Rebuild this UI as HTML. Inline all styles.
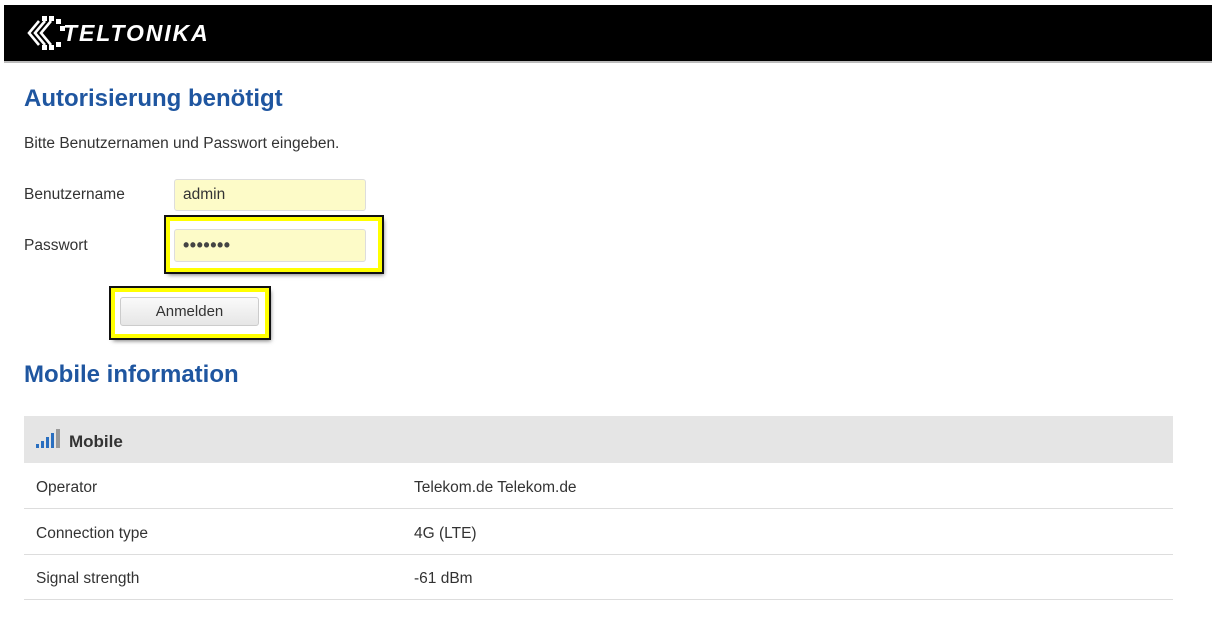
<!DOCTYPE html>
<html><head><meta charset="utf-8"><style>
body{margin:0;width:1217px;height:634px;background:#fff;font-family:"Liberation Sans",Arial,sans-serif;position:relative;overflow:hidden;color:#333}
.a{position:absolute}
.hdr{left:4px;top:5px;width:1208px;height:56px;background:#000;border-bottom:2px solid #bbb}
h1{position:absolute;margin:0;font-size:24px;color:#1f56a0;font-weight:bold}
.t{font-size:15.5px;color:#333}
.inp{background:#fdfbc8;border:1px solid #ddd;border-radius:3px;box-sizing:border-box;font-size:15.5px;padding-left:8px;line-height:30px}
.hl{border:4px solid #ffff00;outline:2px solid #111;box-shadow:2px 3px 4px rgba(0,0,0,.5);box-sizing:border-box}
.row{left:24px;width:1149px;height:45px;border-bottom:1px solid #ddd;font-size:15.5px;line-height:50px}
</style></head><body>
<div class="a hdr">
<svg class="a" style="left:22px;top:10px" width="40" height="36" viewBox="0 0 40 36">
<g fill="none" stroke="#fff" stroke-width="2.6">
<path d="M13 6 L3 18 L13 30"/><path d="M19 6 L9 18 L19 30"/><path d="M25 6 L15 18 L25 30"/></g>
<g fill="#fff"><rect x="16" y="1" width="5" height="5"/><rect x="23" y="1" width="5" height="5"/><rect x="30" y="4" width="5" height="5"/><rect x="34" y="11" width="5" height="5"/><rect x="16" y="30" width="5" height="5"/><rect x="23" y="30" width="5" height="5"/><rect x="30" y="27" width="5" height="5"/></g></svg>
<div class="a" style="left:59px;top:15px;color:#fff;font-weight:900;font-style:italic;font-size:23px;letter-spacing:1.9px">TELTONIKA</div>
</div>
<h1 style="left:24px;top:85px">Autorisierung benötigt</h1>
<div class="a t" style="left:24px;top:135px">Bitte Benutzernamen und Passwort eingeben.</div>
<div class="a t" style="left:24px;top:186px">Benutzername</div>
<div class="a t" style="left:24px;top:237px">Passwort</div>
<div class="a inp" style="left:174px;top:179px;width:192px;height:32px">admin</div>
<div class="a hl" style="left:166px;top:217px;width:216px;height:55px"></div>
<div class="a inp" style="left:174px;top:229px;width:192px;height:33px;font-size:18px;letter-spacing:0.5px;color:#444;font-weight:bold">•••••••</div>
<div class="a hl" style="left:111px;top:288px;width:158px;height:50px"></div>
<div class="a" style="left:120px;top:297px;width:139px;height:29px;border:1px solid #ccc;border-radius:3px;box-sizing:border-box;background:linear-gradient(#fafafa,#e6e6e6);font-size:15px;text-align:center;line-height:27px;color:#333">Anmelden</div>
<h1 style="left:24px;top:361px">Mobile information</h1>
<div class="a" style="left:24px;top:416px;width:1149px;height:47px;background:#e5e5e5"></div>
<svg class="a" style="left:36px;top:429px" width="28" height="20" viewBox="0 0 28 20">
<g fill="#2a6fc0"><rect x="0" y="15" width="3" height="4"/><rect x="5" y="12" width="3" height="7"/><rect x="10" y="8" width="3" height="11"/><rect x="15" y="4" width="3" height="15"/></g><rect x="20" y="0" width="4" height="19" fill="#999"/></svg>
<div class="a" style="left:69px;top:432px;font-size:17px;font-weight:bold;color:#333">Mobile</div>
<div class="a row" style="top:463px"><span class="a" style="left:12px">Operator</span><span class="a" style="left:390px">Telekom.de Telekom.de</span></div>
<div class="a row" style="top:509px"><span class="a" style="left:12px">Connection type</span><span class="a" style="left:390px">4G (LTE)</span></div>
<div class="a row" style="top:554px"><span class="a" style="left:12px">Signal strength</span><span class="a" style="left:390px">-61 dBm</span></div>
</body></html>
